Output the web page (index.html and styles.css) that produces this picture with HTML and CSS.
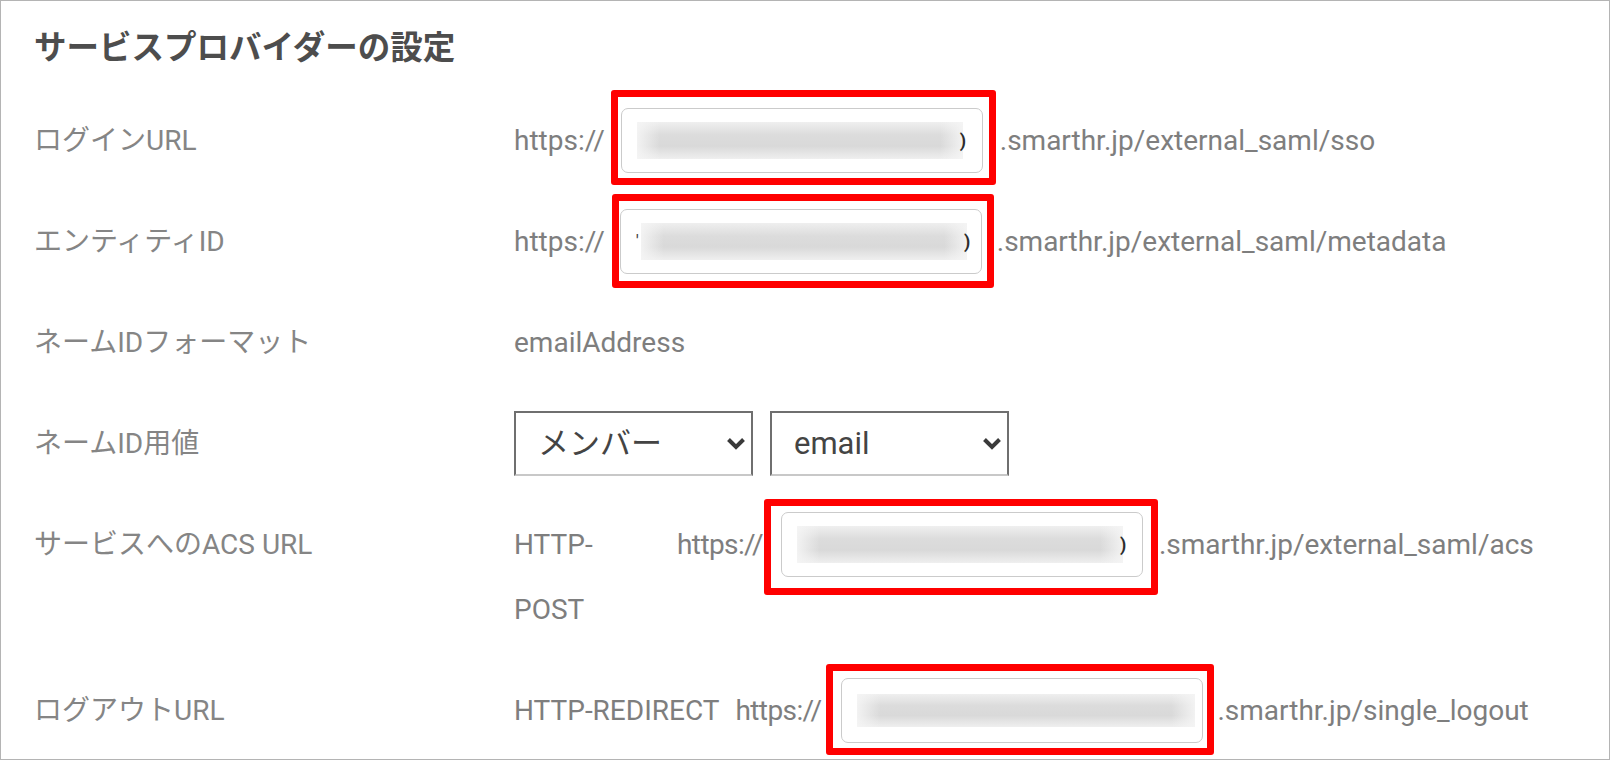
FILE: index.html
```html
<!DOCTYPE html>
<html lang="ja">
<head>
<meta charset="utf-8">
<title>サービスプロバイダーの設定</title>
<link rel="stylesheet" href="styles.css">
</head>
<body>
<div class="panel">
  <h2 class="title">サービスプロバイダーの設定</h2>
  <div class="rows">
    <div class="row">
      <div class="label">ログインURL</div>
      <div class="value">
        <span class="prefix">https://</span>
        <span class="mark mark-1"><span class="field"><span class="blur"></span><span class="tail">)</span></span></span>
        <span class="suffix suffix-1">.smarthr.jp/external_saml/sso</span>
      </div>
    </div>
    <div class="row">
      <div class="label">エンティティID</div>
      <div class="value">
        <span class="prefix">https://</span>
        <span class="mark mark-2"><span class="field"><span class="lead">'</span><span class="blur"></span><span class="tail">)</span></span></span>
        <span class="suffix suffix-2">.smarthr.jp/external_saml/metadata</span>
      </div>
    </div>
    <div class="row">
      <div class="label">ネームIDフォーマット</div>
      <div class="value">emailAddress</div>
    </div>
    <div class="row">
      <div class="label">ネームID用値</div>
      <div class="value value-selects">
        <div class="select">
          <select><option>メンバー</option></select>
          <svg class="chev" viewBox="0 0 20 13"><path d="M2.5 2.5l7.5 7.5 7.5-7.5" fill="none" stroke="#3a3a3a" stroke-width="4"/></svg>
        </div>
        <div class="select">
          <select><option>email</option></select>
          <svg class="chev" viewBox="0 0 20 13"><path d="M2.5 2.5l7.5 7.5 7.5-7.5" fill="none" stroke="#3a3a3a" stroke-width="4"/></svg>
        </div>
      </div>
    </div>
    <div class="row">
      <div class="label">サービスへのACS URL</div>
      <div class="value">
        <span class="binding binding-post">HTTP-POST</span>
        <span class="prefix prefix-tight">https://</span>
        <span class="mark mark-3"><span class="field"><span class="blur"></span><span class="tail">)</span></span></span>
        <span class="suffix suffix-3">.smarthr.jp/external_saml/acs</span>
      </div>
    </div>
    <div class="row">
      <div class="label">ログアウトURL</div>
      <div class="value">
        <span class="binding binding-redirect">HTTP-REDIRECT</span>
        <span class="prefix prefix-tight">https://</span>
        <span class="mark mark-4"><span class="field"><span class="blur blur-wide"></span></span></span>
        <span class="suffix suffix-4">.smarthr.jp/single_logout</span>
      </div>
    </div>
  </div>
</div>
</body>
</html>
```
FILE: styles.css
```css
html, body {
  margin: 0;
  background: #fff;
}

.panel {
  width: 1610px;
  height: 760px;
  box-sizing: border-box;
  border: 1px solid #b4b4b4;
  padding: 23px 0 0 33px;
  overflow: hidden;
  font-family: Roboto, "Noto Sans CJK JP", sans-serif;
}

.title {
  margin: 0 0 36px;
  font-size: 32.5px;
  line-height: 48px;
  font-weight: 700;
  color: #4d4d4d;
}

.rows {
  display: flex;
  flex-direction: column;
  gap: 36px;
}

.row {
  display: flex;
  align-items: flex-start;
}

.label {
  width: 480px;
  flex: none;
  font-size: 28px;
  line-height: 65px;
  color: #858585;
}

.value {
  display: flex;
  align-items: flex-start;
  font-size: 28px;
  line-height: 65px;
  color: #7e7e7e;
  white-space: nowrap;
}

.binding-post {
  width: 145px;
  margin-right: 18px;
  white-space: normal;
}

.binding-redirect {
  margin-right: 16px;
}

.prefix-tight {
  letter-spacing: -0.6px;
}

.mark {
  display: flex;
  flex: none;
  border: 7px solid #ff0000;
  border-radius: 3px;
}

.mark-1 { padding: 11px 6px 5px 3px; margin: -18px 0 -12px 6px; }
.mark-2 { padding: 8px 5px 7px 1px; margin: -15px 0 -14px 7px; }
.mark-3 { padding: 6px 8px 11px 10px; margin: -13px 0 -18px 1px; }
.mark-4 { padding: 7px 4px 5px 8px; margin: -14px 0 -12px 5px; }

.suffix-1 { margin-left: 4px; }
.suffix-2 { margin-left: 3px; }
.suffix-3 { margin-left: 1px; }
.suffix-4 { margin-left: 3px; }

.field {
  display: flex;
  align-items: center;
  width: 362px;
  height: 65px;
  box-sizing: border-box;
  border: 1px solid #cbcbcb;
  border-radius: 7px;
  padding-left: 15px;
  background: #fff;
  overflow: hidden;
}

.blur {
  width: 326px;
  height: 37px;
  flex: none;
  background:
    linear-gradient(to right, rgba(245,245,245,0.9), rgba(245,245,245,0) 7%, rgba(245,245,245,0) 93%, rgba(245,245,245,0.9)),
    linear-gradient(to bottom, #efefef 0%, #dcdcdc 35%, #d9d9d9 65%, #efefef 100%);
}

.blur-wide {
  width: 338px;
  height: 33px;
}

.tail {
  margin-left: -3px;
  font-size: 18px;
  line-height: 20px;
  font-weight: 700;
  color: #2c2c2c;
}

.lead {
  margin-right: 2px;
  font-size: 18px;
  line-height: 20px;
  color: #444;
}

.value-selects {
  align-items: center;
  gap: 17px;
}

.select {
  position: relative;
  width: 239px;
  height: 65px;
}

.select select {
  appearance: none;
  -webkit-appearance: none;
  width: 100%;
  height: 100%;
  box-sizing: border-box;
  margin: 0;
  border: 2px solid #6f6f6f;
  border-bottom-color: #c8c8c8;
  border-radius: 0;
  background: #fff;
  padding: 0 0 0 22px;
  font-family: Roboto, "Noto Sans CJK JP", sans-serif;
  font-size: 31px;
  color: #444;
}

.chev {
  position: absolute;
  right: 7px;
  top: 26px;
  width: 20px;
  height: 13px;
  pointer-events: none;
}
```
